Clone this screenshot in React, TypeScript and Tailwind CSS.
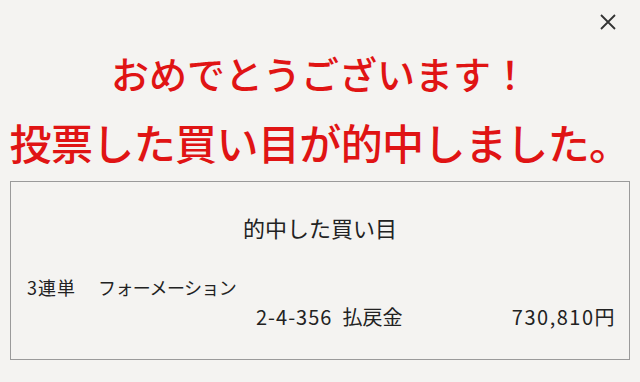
export default function App() {
  return (
    <div className="w-[640px] h-[382px] bg-[#f4f3f1] relative overflow-hidden font-['Noto_Sans_CJK_JP',sans-serif]">
      <button className="absolute right-[22px] top-[12px] w-[20px] h-[20px] flex items-center justify-center text-[#333]" aria-label="close">
        <svg width="18" height="18" viewBox="0 0 18 18" fill="none" stroke="currentColor" strokeWidth="1.8">
          <path d="M2 2L16 16M16 2L2 16" />
        </svg>
      </button>
      <div className="flex flex-col items-center pt-[48px]">
        <h1 className="text-[38px] leading-[50px] font-medium text-[#e01414]">おめでとうございます！</h1>
        <h2 className="text-[42px] leading-[52px] font-medium text-[#e01414] tracking-[-0.6px] mt-[18px]">投票した買い目が的中しました。</h2>
      </div>
      <div className="mx-[10px] mt-[13px] h-[179px] border border-[#9a9a9a] flex flex-col text-[#222]">
        <div className="text-center text-[22px] leading-[28px] mt-[31px]">的中した買い目</div>
        <div className="pl-[16px] mt-[34px] text-[18px] leading-[24px] flex gap-[22px]">
          <span className="tracking-[1px]">3連単</span>
          <span className="tracking-[-0.6px]">フォーメーション</span>
        </div>
        <div className="mt-[6px] text-[20px] leading-[24px] flex pl-[245px] pr-[13px]">
          <span className="tracking-[1px]">2-4-356</span>
          <span className="ml-[10px]">払戻金</span>
          <span className="ml-auto tracking-[1.5px]">730,810円</span>
        </div>
      </div>
    </div>
  );
}
